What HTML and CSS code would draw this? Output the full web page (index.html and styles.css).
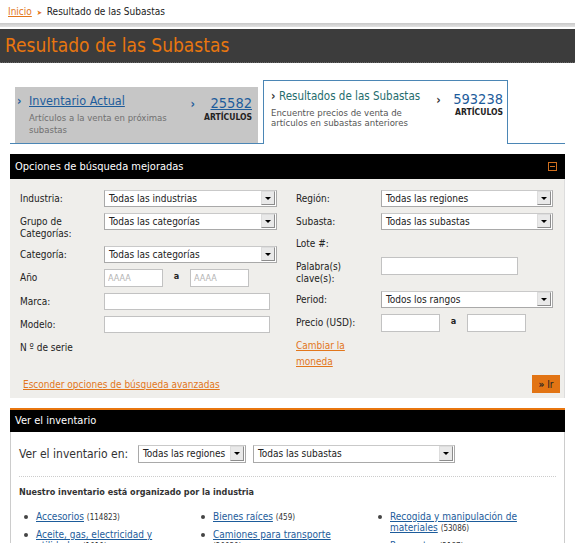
FILE: index.html
```html
<!DOCTYPE html>
<html lang="es">
<head>
  <meta charset="UTF-8">
  <title>Resultado de las Subastas</title>
  <link rel="stylesheet" href="styles.css">
</head>
<body>

<div class="crumb">
  <a href="#">Inicio</a> <span class="crumb-arrow">&#10148;</span> Resultado de las Subastas
</div>
<div class="rule"></div>
<h1 class="page-title">Resultado de las Subastas</h1>

<div class="wrap">

  <div class="tabs">
    <div class="tab tab-off">
      <div class="tab-main">
        <div class="tab-head"><span class="chev">&rsaquo;</span><a href="#">Inventario Actual</a></div>
        <p class="tab-desc">Artículos a la venta en próximas subastas</p>
      </div>
      <div class="tab-count">
        <div class="count-num"><span class="chev">&rsaquo;</span><a href="#">25582</a></div>
        <div class="count-lbl">ARTÍCULOS</div>
      </div>
    </div>
    <div class="tab tab-on">
      <div class="tab-main">
        <div class="tab-head"><span class="chev">&rsaquo;</span><span class="tab-name">Resultados de las Subastas</span></div>
        <p class="tab-desc">Encuentre precios de venta de artículos en subastas anteriores</p>
      </div>
      <div class="tab-count">
        <div class="count-num"><span class="chev">&rsaquo;</span><span>593238</span></div>
        <div class="count-lbl">ARTÍCULOS</div>
      </div>
    </div>
    <div class="tab-fill"></div>
  </div>

  <div class="panel">
    <div class="panel-head">
      <span>Opciones de búsqueda mejoradas</span>
      <span class="collapse"></span>
    </div>
    <div class="panel-body">
      <div class="cols">
        <div class="form-grid">
          <label>Industria:</label>
          <div class="sel"><span class="sel-text">Todas las industrias</span><span class="sel-btn"></span></div>

          <label>Grupo de Categorías:</label>
          <div class="sel"><span class="sel-text">Todas las categorías</span><span class="sel-btn"></span></div>

          <label>Categoría:</label>
          <div class="sel"><span class="sel-text">Todas las categorías</span><span class="sel-btn"></span></div>

          <label>Año</label>
          <div class="range">
            <input class="inp short" type="text" placeholder="AAAA">
            <span class="range-a">a</span>
            <input class="inp short" type="text" placeholder="AAAA">
          </div>

          <label>Marca:</label>
          <input class="inp long" type="text">

          <label>Modelo:</label>
          <input class="inp long" type="text">

          <label>N º de serie</label>
          <div></div>
        </div>

        <div class="form-grid right">
          <label>Región:</label>
          <div class="sel"><span class="sel-text">Todas las regiones</span><span class="sel-btn"></span></div>

          <label>Subasta:</label>
          <div class="sel"><span class="sel-text">Todas las subastas</span><span class="sel-btn"></span></div>

          <label class="lote">Lote #:</label>
          <div></div>

          <label class="kw">Palabra(s) clave(s):</label>
          <input class="inp kw-inp" type="text">

          <label>Period:</label>
          <div class="sel"><span class="sel-text">Todos los rangos</span><span class="sel-btn"></span></div>

          <label>Precio (USD):</label>
          <div class="range">
            <input class="inp short" type="text">
            <span class="range-a">a</span>
            <input class="inp short" type="text">
          </div>

          <a class="currency" href="#">Cambiar la moneda</a>
          <div></div>
        </div>
      </div>

      <div class="panel-foot">
        <a class="hide-link" href="#">Esconder opciones de búsqueda avanzadas</a>
        <button class="go-btn"><b>&raquo;</b> Ir</button>
      </div>
    </div>
  </div>

  <div class="inv">
    <div class="inv-head">Ver el inventario</div>
    <div class="inv-body">
      <div class="inv-filter">
        <span class="inv-lbl">Ver el inventario en:</span>
        <div class="sel sel-region"><span class="sel-text">Todas las regiones</span><span class="sel-btn"></span></div>
        <div class="sel sel-sale"><span class="sel-text">Todas las subastas</span><span class="sel-btn"></span></div>
      </div>
      <h3 class="inv-title">Nuestro inventario está organizado por la industria</h3>
      <div class="ind-cols">
        <ul class="ind-list">
          <li><a href="#">Accesorios</a> <small>(114823)</small></li>
          <li><a href="#">Aceite, gas, electricidad y utilidades</a> <small>(1010)</small></li>
        </ul>
        <ul class="ind-list">
          <li><a href="#">Bienes raíces</a> <small>(459)</small></li>
          <li><a href="#">Camiones para transporte</a> <small>(20030)</small></li>
        </ul>
        <ul class="ind-list">
          <li><a href="#">Recogida y manipulación de materiales</a> <small>(53086)</small></li>
          <li><a href="#">Repuestos</a> <small>(2187)</small></li>
        </ul>
      </div>
    </div>
  </div>

</div>

</body>
</html>
```

FILE: styles.css
```css
* {
  box-sizing: border-box;
}

body {
  margin: 0;
  font-family: "DejaVu Sans Condensed", "DejaVu Sans", Tahoma, sans-serif;
  font-size: 10px;
  color: #222;
  background: #fff;
}

a {
  color: #1d5c9b;
}

/* breadcrumb + title bar */
.crumb {
  height: 23px;
  padding: 6px 8px 0;
  font-size: 10px;
  color: #222;
}

.crumb a {
  color: #e2761b;
}

.crumb-arrow {
  color: #e2761b;
  font-size: 7px;
  margin: 0 2px;
}

.rule {
  height: 4px;
  background: linear-gradient(#c9c9c9, #e2e2e2);
  margin-bottom: 2px;
}

.page-title {
  margin: 0;
  height: 34px;
  padding: 5px 5px 0;
  background: #3c3c3c;
  border-bottom: 1px dotted #666;
  color: #e8760f;
  font-size: 19px;
  font-weight: normal;
}

.wrap {
  margin: 17px 10px 0;
}

/* tabs */
.tabs {
  display: flex;
  align-items: flex-end;
  padding-left: 5px;
  border-bottom: 1px solid #4b86b5;
}

.tab {
  display: flex;
  justify-content: space-between;
}

.tab-off {
  width: 243px;
  height: 56px;
  background: #c6c6c6;
  padding: 6px 6px 0 2px;
  margin-right: 5px;
}

.tab-on {
  width: 245px;
  height: 64px;
  background: #fff;
  border: 1px solid #4b86b5;
  border-bottom: none;
  margin-bottom: -1px;
  padding: 8px 4px 0 7px;
}

.tab-main {
  flex: 1;
}

.chev {
  display: inline-block;
  width: 12px;
  color: #1d5c9b;
  font-weight: bold;
  font-size: 12px;
}

.tab-head {
  font-size: 12.5px;
  white-space: nowrap;
}

.tab-on .tab-head {
  font-size: 11.5px;
}

.tab-on .tab-head .chev {
  width: 8px;
  color: #333;
}

.tab-name {
  color: #246c6d;
}

.tab-desc {
  margin: 4px 0 0 12px;
  font-size: 9.5px;
  line-height: 12px;
  color: #707070;
  width: 150px;
}

.tab-on .tab-desc {
  margin: 5px 0 0 0;
  line-height: 10px;
  color: #555;
}

.tab-count {
  text-align: right;
  padding-top: 2px;
}

.count-num {
  font-size: 14.5px;
  white-space: nowrap;
}

.count-num .chev {
  width: 20px;
  text-align: left;
}

.tab-on .count-num {
  color: #1d5c9b;
}

.tab-on .count-num .chev {
  width: 17px;
  color: #333;
}

.count-lbl {
  font-size: 8.5px;
  font-weight: bold;
  color: #222;
  margin-top: 1px;
}

.tab-on .count-lbl {
  margin-top: 0;
}

/* advanced search panel */
.panel {
  margin-top: 10px;
}

.panel-head {
  height: 25px;
  background: #000;
  color: #fff;
  font-size: 11px;
  display: flex;
  justify-content: space-between;
  align-items: center;
  padding: 0 8px 0 5px;
}

.collapse {
  width: 9px;
  height: 9px;
  border: 1px solid #d06f1e;
  display: flex;
  align-items: center;
  justify-content: center;
}

.collapse::after {
  content: "";
  width: 5px;
  height: 1px;
  background: #d06f1e;
}

.panel-body {
  background: #efeeeb;
  padding: 11px 10px 5px;
  border-right: 1px solid #ddd;
}

.cols {
  display: flex;
  gap: 19px;
}

.form-grid {
  display: grid;
  grid-template-columns: 84px 173px;
  row-gap: 6px;
  align-items: start;
  align-content: start;
}

.form-grid.right {
  grid-template-columns: 85px 172px;
}

.form-grid label {
  padding-top: 3px;
  line-height: 12px;
  font-size: 10px;
  width: 60px;
}

.form-grid label.lote {
  padding-top: 2px;
  height: 15px;
}

.form-grid label.kw {
  padding-top: 4px;
}

/* drop-downs */
.sel {
  display: flex;
  height: 17px;
  background: #fff;
  border: 1px solid #a9a9a9;
  border-top-color: #c9c9c9;
}

.sel-text {
  flex: 1;
  padding: 2px 4px 0;
  font-size: 10px;
  white-space: nowrap;
  overflow: hidden;
}

.sel-btn {
  width: 14px;
  margin: 0 1px 1px 0;
  background: #e9e9e9;
  border: 1px solid #8c8c8c;
  border-top-color: #ddd;
  border-left-color: #ddd;
  display: flex;
  align-items: center;
  justify-content: center;
}

.sel-btn::after {
  content: "";
  border-left: 3px solid transparent;
  border-right: 3px solid transparent;
  border-top: 3px solid #000;
}

/* text inputs */
.inp {
  height: 18px;
  border: 1px solid #c2c2c2;
  background: #fff;
  font: inherit;
  font-size: 9px;
  padding: 0 3px;
}

.inp::placeholder {
  color: #b3b3b3;
}

.inp.long {
  width: 166px;
  height: 17px;
}

.inp.short {
  width: 59px;
}

.inp.kw-inp {
  width: 137px;
  height: 18px;
}

.range {
  display: flex;
  align-items: center;
}

.range-a {
  width: 27px;
  text-align: center;
  font-weight: bold;
  font-size: 9px;
  padding-bottom: 4px;
}

.currency {
  color: #e2761b;
  font-size: 10px;
  line-height: 16px;
  width: 60px;
}

.panel-foot {
  display: flex;
  justify-content: space-between;
  align-items: flex-end;
  margin-top: 5px;
  padding-left: 3px;
}

.hide-link {
  color: #e2761b;
  font-size: 10px;
  margin-bottom: 3px;
}

.go-btn {
  width: 28px;
  height: 18px;
  margin-right: -6px;
  background: #e27414;
  border: none;
  padding: 0;
  font: inherit;
  font-size: 10px;
  color: #222;
}

/* inventory block */
.inv {
  margin-top: 10px;
  border-top: 2px solid #e8760f;
}

.inv-head {
  height: 22px;
  background: #000;
  color: #fff;
  font-size: 11px;
  padding: 4px 5px 0;
}

.inv-body {
  border: 1px solid #ccc;
  border-top: none;
  padding: 13px 8px 20px;
}

.inv-filter {
  display: flex;
  align-items: center;
  gap: 7px;
  padding-bottom: 13px;
  border-bottom: 1px dotted #ccc;
}

.inv-lbl {
  font-size: 12px;
  color: #333;
  width: 112px;
  white-space: nowrap;
}

.sel-region {
  width: 108px;
  height: 18px;
}

.sel-sale {
  width: 202px;
  height: 18px;
}

.inv-title {
  margin: 10px 0 0;
  font-size: 9px;
  font-weight: bold;
  color: #333;
}

/* industry list, three independent columns */
.ind-cols {
  display: flex;
  margin-top: 14px;
  padding-left: 5px;
}

.ind-list {
  list-style: none;
  margin: 0;
  padding: 0;
  width: 177px;
  display: flex;
  flex-direction: column;
  gap: 6px;
}

.ind-list li {
  position: relative;
  padding: 0 20px 0 12px;
  line-height: 11px;
  font-size: 10px;
}

.ind-list li::before {
  content: "";
  position: absolute;
  left: 0;
  top: 4px;
  width: 4px;
  height: 4px;
  border-radius: 50%;
  background: #444;
}

.ind-list small {
  font-size: 8px;
  color: #333;
}
```
